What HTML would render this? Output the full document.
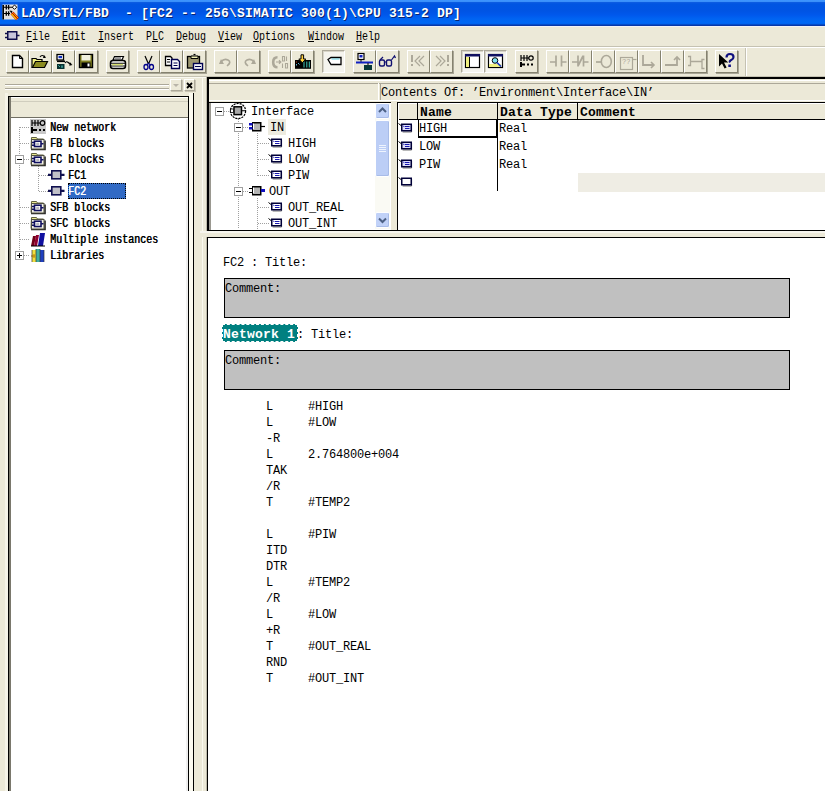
<!DOCTYPE html>
<html><head><meta charset="utf-8"><style>
*{margin:0;padding:0;box-sizing:border-box}
html,body{width:825px;height:791px;overflow:hidden;background:#ECE9D8}
body{position:relative;font-family:"Liberation Mono",monospace;color:#000}
.a{position:absolute}
.t{position:absolute;white-space:pre;line-height:16px}
.m{font-size:12px;transform:scaleX(0.8333);transform-origin:0 0}
.c{font-size:12px;letter-spacing:-0.2px}
.b6{font-size:12px;font-weight:normal;text-shadow:0.7px 0 0 currentColor;transform:scaleX(0.8333);transform-origin:0 0}
.btn{position:absolute;top:50px;width:23px;height:23px;border-top:1px solid #fff;border-left:1px solid #fff;border-right:1px solid #85826F;border-bottom:1px solid #85826F;box-shadow:1px 1px 0 #A8A595}
.btn svg{position:absolute;left:-1px;top:-1px}
.chk{background:#F5F4EE;border-top:1px solid #ACA899;border-left:1px solid #ACA899;border-right:1px solid #fff;border-bottom:1px solid #fff;box-shadow:inset 1px 1px 0 #d8d5c8}
</style></head><body>
<div class="a" style="left:0;top:0;width:825px;height:26px;background:linear-gradient(#3D95FF 0px,#3A90FA 1.5px,#0B5CE2 2.5px,#0055E2 4px,#0054E4 11px,#0058EC 15px,#0064F2 19px,#0068F4 23px,#0060EA 24px,#0838A8 25px,#0838A8 26px)"></div>
<svg class="a" style="left:0;top:0" width="20" height="22" viewBox="0 0 20 22">
<rect x="2.5" y="4.5" width="15" height="15" fill="#E6E2E0"/>
<path d="M3.2 5v14.5" stroke="#000" stroke-width="1.6"/>
<path d="M3 7.2h13M3 13.5h7" stroke="#000" stroke-width="1.1"/>
<path d="M6.3 5v4.5M8.6 5v4.5M6.3 11.3v4.5M8.6 11.3v4.5" stroke="#000" stroke-width="1.3"/>
<path d="M14.5 5l2.2 2.2l-2.2 2.2l-2.2-2.2z" fill="#fff" stroke="#000" stroke-width="1"/>
<path d="M9.5 10.5l3 0.5l-1 2.5z" fill="#000"/>
<path d="M12 13l5.5 6" stroke="#C00000" stroke-width="4"/>
<path d="M11.5 13.8l5 5.5" stroke="#FFE000" stroke-width="1.2"/><path d="M13 12.6l5 5.5" stroke="#FFE000" stroke-width="0.9"/>
</svg>
<div class="t " style="left:21px;top:6px;font-size:13px;font-weight:bold;letter-spacing:0.2px;color:#fff;text-shadow:1px 1px 0 #0a2470">LAD/STL/FBD  - [FC2 -- 256\SIMATIC 300(1)\CPU 315-2 DP]</div>
<div class="a" style="left:0px;top:26px;width:825px;height:1px;background:#F2F2F6;"></div>
<svg class="a" style="left:0;top:26px" width="22" height="18" viewBox="0 26 22 18">
<rect x="7.75" y="31.75" width="9" height="7.5" fill="#C8C6DA" stroke="#10104a" stroke-width="1.5"/>
<path d="M5 33.6h2.5M5 37.4h2.5M17 35.5h2.5" stroke="#10104a" stroke-width="1.5"/></svg>
<div class="t m" style="left:26px;top:29px;"><u>F</u>ile</div>
<div class="t m" style="left:62px;top:29px;"><u>E</u>dit</div>
<div class="t m" style="left:98px;top:29px;"><u>I</u>nsert</div>
<div class="t m" style="left:146px;top:29px;">P<u>L</u>C</div>
<div class="t m" style="left:176px;top:29px;"><u>D</u>ebug</div>
<div class="t m" style="left:218px;top:29px;"><u>V</u>iew</div>
<div class="t m" style="left:253px;top:29px;"><u>O</u>ptions</div>
<div class="t m" style="left:308px;top:29px;"><u>W</u>indow</div>
<div class="t m" style="left:356px;top:29px;"><u>H</u>elp</div>
<div class="a" style="left:0px;top:46px;width:825px;height:1px;background:#C5C2B2;"></div>
<div class="a" style="left:0px;top:47px;width:825px;height:1px;background:#fff;"></div>
<div class="btn" style="left:6px"><svg width="23" height="23" viewBox="0 0 23 23"><path d="M6.5 5.5h7l3 3v9h-10z" fill="#fff" stroke="#000" stroke-width="1.4"/><path d="M13.5 5.5v3h3" fill="none" stroke="#000" stroke-width="1"/></svg></div>
<div class="btn" style="left:29px"><svg width="23" height="23" viewBox="0 0 23 23"><path d="M3 8.5h4l1 1h5v8h-10z" fill="#f0f080" stroke="#000" stroke-width="1.2"/><path d="M3.5 17.5l3-6h12l-3 6z" fill="#8c8c20" stroke="#000" stroke-width="1.2"/><path d="M11 7q2-3 5 0" fill="none" stroke="#000" stroke-width="1.2"/><path d="M15 5l2 3h-3z" fill="#000"/></svg></div>
<div class="btn" style="left:52px"><svg width="23" height="23" viewBox="0 0 23 23"><rect x="5" y="4.5" width="6.5" height="5.5" fill="#fff" stroke="#000" stroke-width="1.3"/><rect x="6.5" y="6" width="3.5" height="2.2" fill="#1030C0"/><path d="M5 11.3h8" stroke="#000" stroke-width="1.6"/><rect x="5" y="14" width="7.5" height="5" fill="#063030"/><path d="M6.5 15.5l1.2 1.2M10 15.5v2.3" stroke="#60E0D0" stroke-width="1"/><path d="M13 13q1.5-2.2 3.2-0.5t2.8 0.5" fill="none" stroke="#000" stroke-width="1.2"/><path d="M17.5 12.5l3 2.5l-3.2 0.8z" fill="#000"/></svg></div>
<div class="btn" style="left:75px"><svg width="23" height="23" viewBox="0 0 23 23"><rect x="4.5" y="4.5" width="13" height="13" fill="#808020" stroke="#000" stroke-width="1.4"/><rect x="6.5" y="5" width="9" height="5.5" fill="#f0f0e0"/><rect x="6.5" y="12.5" width="9" height="5" fill="#000"/><rect x="12.5" y="13.5" width="2" height="3" fill="#fff"/></svg></div>
<div class="btn" style="left:106px"><svg width="23" height="23" viewBox="0 0 23 23"><path d="M8.5 6.5h9l-1.5 3.5h-9z" fill="#fff" stroke="#000" stroke-width="1.2"/><path d="M9 8h6" stroke="#000" stroke-width="0.8"/><rect x="4.5" y="10.5" width="15" height="8" rx="2.5" fill="#fff" stroke="#000" stroke-width="1.5"/><path d="M5 13.3h14M5 16h14" stroke="#000" stroke-width="1.1"/><path d="M6 14.6h11" stroke="#D8E070" stroke-width="1.4"/></svg></div>
<div class="btn" style="left:137px"><svg width="23" height="23" viewBox="0 0 23 23"><path d="M8 6l3.5 8M15 6l-3.5 8" stroke="#000" stroke-width="1.2"/><ellipse cx="9" cy="17" rx="2" ry="2.5" fill="none" stroke="#00008A" stroke-width="1.3"/><ellipse cx="14.5" cy="17" rx="2" ry="2.5" fill="none" stroke="#00008A" stroke-width="1.3"/><path d="M10 14.5l1.5-1l1.5 1" stroke="#00008A" stroke-width="1.1" fill="none"/></svg></div>
<div class="btn" style="left:160px"><svg width="23" height="23" viewBox="0 0 23 23"><path d="M5.5 6.5h5l1.5 1.5v7.5h-6.5z" fill="#fff" stroke="#000" stroke-width="1.3"/><path d="M7 9.5h3M7 12h3" stroke="#000" stroke-width="1.1"/><path d="M11.5 9.5h6l2 2v7h-8z" fill="#fff" stroke="#000050" stroke-width="1.4"/><path d="M13.5 13h4M13.5 15.5h4" stroke="#000050" stroke-width="1.1"/></svg></div>
<div class="btn" style="left:183px"><svg width="23" height="23" viewBox="0 0 23 23"><rect x="4.5" y="6.5" width="12" height="11.5" fill="#9C9670" stroke="#000" stroke-width="1.3"/><path d="M8 6h7v2.5h-7z" fill="#F0F0B8" stroke="#000" stroke-width="1"/><path d="M10.5 4.5h2" stroke="#000" stroke-width="1.2"/><rect x="10.5" y="13.5" width="9" height="6" fill="#fff" stroke="#000050" stroke-width="1.4"/><path d="M12 16.5h6" stroke="#000050" stroke-width="1.1"/></svg></div>
<div class="btn" style="left:214px"><svg width="23" height="23" viewBox="0 0 23 23"><path d="M7 9l-2 5h5z" fill="#ACA899"/><path d="M7 12q3-4 7-2t-1 6" fill="none" stroke="#ACA899" stroke-width="1.6"/></svg></div>
<div class="btn" style="left:237px"><svg width="23" height="23" viewBox="0 0 23 23"><path d="M17 9l2 5h-5z" fill="#ACA899"/><path d="M17 12q-3-4-7-2t1 6" fill="none" stroke="#ACA899" stroke-width="1.6"/></svg></div>
<div class="btn" style="left:268px"><svg width="23" height="23" viewBox="0 0 23 23"><path d="M9.5 7.2q-4.3 0-4.3 5t4.3 5" fill="none" stroke="#ACA899" stroke-width="2.6"/><path d="M8 12h4.5M11 10.3l1.8 1.7l-1.8 1.7" stroke="#ACA899" stroke-width="1.2" fill="none"/><path d="M14.5 6.5h2v4.5h-2zM18.5 6.5v4.5M14.5 13.5v4.5M17.5 13.5h2v4.5h-2z" fill="none" stroke="#ACA899" stroke-width="1.1"/></svg></div>
<div class="btn" style="left:291px"><svg width="23" height="23" viewBox="0 0 23 23"><rect x="4" y="10" width="16" height="8.8" fill="#000"/><path d="M13 11.5v6M15.8 11.5v6M18.3 11.5v6" stroke="#40C8B8" stroke-width="1"/><path d="M5.5 11.5v1" stroke="#c04020" stroke-width="1"/><path d="M5.5 14v1.5M7 13l1.5 1.5" stroke="#60B0D0" stroke-width="1"/><path d="M10 4.8h2.6v4.2h2.2l-3.5 3.8l-3.5-3.8h2.2z" fill="#FFD040" stroke="#000" stroke-width="1"/></svg></div>
<div class="btn chk" style="left:322px"><svg width="23" height="23" viewBox="0 0 23 23"><path d="M6 9.5l3 -2h10v7h-10z" fill="#fff" stroke="#000" stroke-width="1.3"/><path d="M9.5 9h8" stroke="#60d0e0" stroke-width="1"/></svg></div>
<div class="btn" style="left:353px"><svg width="23" height="23" viewBox="0 0 23 23"><rect x="5" y="3.5" width="6" height="6" fill="#fff" stroke="#000" stroke-width="1.2"/><rect x="6.5" y="5" width="3" height="2.5" fill="#1020c0"/><path d="M8 10v2" stroke="#000"/><path d="M3 12.5h17" stroke="#1020c0" stroke-width="2"/><path d="M15 13v2" stroke="#000"/><rect x="11" y="15" width="8" height="5" fill="#083838"/></svg></div>
<div class="btn" style="left:376px"><svg width="23" height="23" viewBox="0 0 23 23"><rect x="3.5" y="10" width="5" height="6" rx="1.5" fill="none" stroke="#101070" stroke-width="1.4"/><rect x="10.5" y="10" width="5" height="6" rx="1.5" fill="none" stroke="#101070" stroke-width="1.4"/><path d="M8.5 12h2M4 10l3-3M15.5 10l3-4l1 2" fill="none" stroke="#101070" stroke-width="1.2"/></svg></div>
<div class="btn" style="left:407px"><svg width="23" height="23" viewBox="0 0 23 23"><path d="M5 5v7M5 14v2" stroke="#ACA899" stroke-width="2"/><path d="M13 6l-5 5l5 5M17 6l-5 5l5 5" fill="none" stroke="#ACA899" stroke-width="1.2"/></svg></div>
<div class="btn" style="left:430px"><svg width="23" height="23" viewBox="0 0 23 23"><path d="M18 5v7M18 14v2" stroke="#ACA899" stroke-width="2"/><path d="M6 6l5 5l-5 5M10 6l5 5l-5 5" fill="none" stroke="#ACA899" stroke-width="1.2"/></svg></div>
<div class="btn chk" style="left:461px"><svg width="23" height="23" viewBox="0 0 23 23"><rect x="4.5" y="4.5" width="14" height="13" fill="#fff" stroke="#000" stroke-width="1.2"/><rect x="4" y="4" width="15" height="2.5" fill="#101060"/><rect x="5" y="7" width="3" height="10" fill="#f0f080"/><path d="M8.5 7v10" stroke="#000"/></svg></div>
<div class="btn chk" style="left:484px"><svg width="23" height="23" viewBox="0 0 23 23"><rect x="4.5" y="4.5" width="14" height="13" fill="#fff" stroke="#000" stroke-width="1.2"/><rect x="4" y="4" width="15" height="2.5" fill="#101060"/><rect x="5" y="14" width="12" height="3" fill="#f0f080"/><circle cx="11" cy="10.5" r="2.8" fill="#80e0f0" stroke="#000" stroke-width="1"/><path d="M13 12.5l4 4" stroke="#1030c0" stroke-width="1.6"/></svg></div>
<div class="btn" style="left:515px"><svg width="23" height="23" viewBox="0 0 23 23"><path d="M6 5v6M9 5v6M6 8h6M12 5v6M12 8h2" stroke="#000" stroke-width="1.2"/><circle cx="16" cy="8" r="2.2" fill="none" stroke="#000" stroke-width="1.2"/><path d="M6 12v5M6 14.5h4" stroke="#000" stroke-width="2"/><rect x="12" y="13.5" width="2" height="2" fill="#000"/><rect x="16" y="13.5" width="2" height="2" fill="#000"/></svg></div>
<div class="btn" style="left:546px"><svg width="23" height="23" viewBox="0 0 23 23"><path d="M4 12h6M15.5 12h5M10 5.5v11M15.5 5.5v11" stroke="#ACA899" stroke-width="1.7"/></svg></div>
<div class="btn" style="left:569px"><svg width="23" height="23" viewBox="0 0 23 23"><path d="M3 12h6M14.5 12h5M9 5.5v11M14.5 5.5v11M14 6l-5 10" stroke="#ACA899" stroke-width="1.7"/></svg></div>
<div class="btn" style="left:592px"><svg width="23" height="23" viewBox="0 0 23 23"><path d="M4 12h5" stroke="#ACA899" stroke-width="1.7"/><ellipse cx="14.3" cy="11.5" rx="5" ry="6" fill="none" stroke="#ACA899" stroke-width="1.6"/></svg></div>
<div class="btn" style="left:615px"><svg width="23" height="23" viewBox="0 0 23 23"><rect x="5.5" y="7.5" width="12" height="12" fill="none" stroke="#ACA899" stroke-width="1.2"/><path d="M17.5 9.5h4" stroke="#ACA899" stroke-width="1.2"/><text x="7" y="14" font-size="7" fill="#ACA899" font-family="Liberation Mono">??</text></svg></div>
<div class="btn" style="left:638px"><svg width="23" height="23" viewBox="0 0 23 23"><path d="M5 5v10h10" fill="none" stroke="#ACA899" stroke-width="1.8"/><path d="M13 12l3 3l-3 3" fill="none" stroke="#ACA899" stroke-width="1.6"/></svg></div>
<div class="btn" style="left:661px"><svg width="23" height="23" viewBox="0 0 23 23"><path d="M4 15h12v-8" fill="none" stroke="#ACA899" stroke-width="1.8"/><path d="M13 10l3-3l3 3" fill="none" stroke="#ACA899" stroke-width="1.6"/></svg></div>
<div class="btn" style="left:684px"><svg width="23" height="23" viewBox="0 0 23 23"><path d="M4 6.5h2.5v9h-2.5M7 11.5h11M20.5 9.5h-2.5v9h2.5" fill="none" stroke="#ACA899" stroke-width="1.3"/></svg></div>
<div class="btn" style="left:715px"><svg width="23" height="23" viewBox="0 0 23 23"><path d="M4 4v12.5l3-3l2.6 5l2-1l-2.6-5h4.3z" fill="#000"/><path d="M11.5 7.5q0-3.5 3.5-3.5t3.5 3q0 2-2.2 3t-1.3 2.5" fill="none" stroke="#101080" stroke-width="2.2"/><rect x="13.3" y="14.5" width="2.6" height="2.5" fill="#101080"/></svg></div>
<div class="a" style="left:745px;top:48px;width:1px;height:28px;background:#C5C2B2;"></div>
<div class="a" style="left:746px;top:48px;width:1px;height:28px;background:#fff;"></div>
<div class="a" style="left:0px;top:76px;width:825px;height:1px;background:#C5C2B2;"></div>
<div class="a" style="left:0px;top:77px;width:825px;height:1px;background:#FAF9F2;"></div>
<div class="a" style="left:5px;top:84px;width:164px;height:1px;background:#ACA899;"></div>
<div class="a" style="left:5px;top:85px;width:164px;height:1px;background:#fff;"></div>
<div class="a" style="left:5px;top:88px;width:164px;height:1px;background:#ACA899;"></div>
<div class="a" style="left:5px;top:89px;width:164px;height:1px;background:#fff;"></div>
<div class="a" style="left:170px;top:79px;width:12px;height:12px;border-top:1px solid #fff;border-left:1px solid #fff;border-right:1px solid #ACA899;border-bottom:1px solid #ACA899;box-shadow:1px 1px 0 #c8c4b4"></div>
<div class="a" style="left:173px;top:84px;width:0;height:0;border-left:3px solid transparent;border-right:3px solid transparent;border-top:3px solid #b8b4a8"></div>
<div class="a" style="left:184px;top:79px;width:11px;height:12px;border-top:1px solid #fff;border-left:1px solid #fff;border-right:1px solid #ACA899;border-bottom:1px solid #ACA899;box-shadow:1px 1px 0 #c8c4b4"></div>
<svg class="a" style="left:186px;top:82px" width="8" height="7"><path d="M1 1l5 5M6 1l-5 5" stroke="#000" stroke-width="1.8"/></svg>
<div class="a" style="left:8px;top:96px;width:181px;height:700px;background:#fff;border:1px solid #000"></div>
<div class="a" style="left:9px;top:97px;width:179px;height:21px;background:#ECE9D8;border-top:1px solid #fff;border-bottom:1px solid #716F64"></div>
<div class="a" style="left:9px;top:101px;width:179px;height:1px;background:#D0CDBE;"></div>
<div class="a" style="left:9px;top:97px;width:2px;height:700px;background:#7a786c;"></div>
<div class="a" style="left:189px;top:93px;width:4px;height:700px;background:#FBFAF0;"></div>
<div class="a" style="left:5px;top:93px;width:3px;height:700px;background:#F6F4E8;"></div>
<div class="a" style="left:202px;top:77px;width:1px;height:714px;background:#FBFAF0;"></div>
<div class="a" style="left:206px;top:77px;width:1px;height:714px;background:#BDBAAA;"></div>
<div class="a" style="left:186px;top:119px;width:2px;height:672px;background:#EFEFEF;"></div>
<div class="a" style="left:193px;top:93px;width:1px;height:700px;background:#000;"></div>
<div class="a" style="left:19px;top:127px;width:1px;height:125px;background:repeating-linear-gradient(#A0A0A0 0 1px,transparent 1px 2px)"></div>
<div class="a" style="left:20px;top:127px;width:10px;height:1px;background:repeating-linear-gradient(90deg,#A0A0A0 0 1px,transparent 1px 2px)"></div>
<div class="a" style="left:20px;top:143px;width:10px;height:1px;background:repeating-linear-gradient(90deg,#A0A0A0 0 1px,transparent 1px 2px)"></div>
<div class="a" style="left:20px;top:207px;width:10px;height:1px;background:repeating-linear-gradient(90deg,#A0A0A0 0 1px,transparent 1px 2px)"></div>
<div class="a" style="left:20px;top:223px;width:10px;height:1px;background:repeating-linear-gradient(90deg,#A0A0A0 0 1px,transparent 1px 2px)"></div>
<div class="a" style="left:20px;top:239px;width:10px;height:1px;background:repeating-linear-gradient(90deg,#A0A0A0 0 1px,transparent 1px 2px)"></div>
<div class="a" style="left:38px;top:166px;width:1px;height:25px;background:repeating-linear-gradient(#A0A0A0 0 1px,transparent 1px 2px)"></div>
<div class="a" style="left:39px;top:175px;width:10px;height:1px;background:repeating-linear-gradient(90deg,#A0A0A0 0 1px,transparent 1px 2px)"></div>
<div class="a" style="left:39px;top:191px;width:10px;height:1px;background:repeating-linear-gradient(90deg,#A0A0A0 0 1px,transparent 1px 2px)"></div>
<div class="a" style="left:24px;top:159px;width:6px;height:1px;background:repeating-linear-gradient(90deg,#A0A0A0 0 1px,transparent 1px 2px)"></div>
<div class="a" style="left:24px;top:255px;width:6px;height:1px;background:repeating-linear-gradient(90deg,#A0A0A0 0 1px,transparent 1px 2px)"></div>
<div class="a" style="left:15px;top:155px;width:9px;height:9px;border:1px solid #A0A0A0;background:#fff"></div>
<div class="a" style="left:17px;top:159px;width:5px;height:1px;background:#000;"></div>
<div class="a" style="left:15px;top:251px;width:9px;height:9px;border:1px solid #A0A0A0;background:#fff"></div>
<div class="a" style="left:17px;top:255px;width:5px;height:1px;background:#000;"></div>
<div class="a" style="left:19px;top:253px;width:1px;height:5px;background:#000;"></div>
<svg class="a" style="left:30px;top:119px" width="16" height="15" viewBox="0 0 16 15"><rect x="0" y="0" width="16" height="15" fill="#c8c8c8"/><path d="M2 1v6M5 1v6M2 4h6M8 1v6M8 4h2" stroke="#000" stroke-width="1.2"/><circle cx="12.5" cy="4" r="2.3" fill="none" stroke="#000" stroke-width="1.2"/><path d="M2 8v6M2 11h5" stroke="#000" stroke-width="2"/><rect x="9" y="10" width="2" height="2" fill="#000"/><rect x="13" y="10" width="2" height="2" fill="#000"/></svg>
<svg class="a" style="left:30px;top:135px" width="16" height="16" viewBox="0 0 16 16"><path d="M1.5 2.5h5l1 1.5h6v9.5h-12.5z" fill="#e8e890" stroke="#606040" stroke-width="1"/><path d="M1 14.5h14v-9" fill="none" stroke="#202020" stroke-width="1.6"/><rect x="1.5" y="4.5" width="12.5" height="9.5" fill="#f4f2e6" stroke="#505040" stroke-width="1"/><rect x="4.5" y="6.2" width="6.5" height="5.3" fill="#fff" stroke="#101060" stroke-width="1.6"/><rect x="6.2" y="7.7" width="3" height="2.5" fill="#b8b8c0"/><path d="M2 7.5h2.5M2 10.2h2.5M11 8.8h2.5" stroke="#101060" stroke-width="1.4"/></svg>
<svg class="a" style="left:30px;top:151px" width="16" height="16" viewBox="0 0 16 16"><path d="M1.5 2.5h5l1 1.5h6v9.5h-12.5z" fill="#e8e890" stroke="#606040" stroke-width="1"/><path d="M1 14.5h14v-9" fill="none" stroke="#202020" stroke-width="1.6"/><rect x="1.5" y="4.5" width="12.5" height="9.5" fill="#f4f2e6" stroke="#505040" stroke-width="1"/><rect x="4.5" y="6.2" width="6.5" height="5.3" fill="#fff" stroke="#101060" stroke-width="1.6"/><rect x="6.2" y="7.7" width="3" height="2.5" fill="#b8b8c0"/><path d="M2 7.5h2.5M2 10.2h2.5M11 8.8h2.5" stroke="#101060" stroke-width="1.4"/></svg>
<svg class="a" style="left:30px;top:199px" width="16" height="16" viewBox="0 0 16 16"><path d="M1.5 2.5h5l1 1.5h6v9.5h-12.5z" fill="#e8e890" stroke="#606040" stroke-width="1"/><path d="M1 14.5h14v-9" fill="none" stroke="#202020" stroke-width="1.6"/><rect x="1.5" y="4.5" width="12.5" height="9.5" fill="#f4f2e6" stroke="#505040" stroke-width="1"/><rect x="4.5" y="6.2" width="6.5" height="5.3" fill="#fff" stroke="#101060" stroke-width="1.6"/><rect x="6.2" y="7.7" width="3" height="2.5" fill="#b8b8c0"/><path d="M2 7.5h2.5M2 10.2h2.5M11 8.8h2.5" stroke="#101060" stroke-width="1.4"/></svg>
<svg class="a" style="left:30px;top:215px" width="16" height="16" viewBox="0 0 16 16"><path d="M1.5 2.5h5l1 1.5h6v9.5h-12.5z" fill="#e8e890" stroke="#606040" stroke-width="1"/><path d="M1 14.5h14v-9" fill="none" stroke="#202020" stroke-width="1.6"/><rect x="1.5" y="4.5" width="12.5" height="9.5" fill="#f4f2e6" stroke="#505040" stroke-width="1"/><rect x="4.5" y="6.2" width="6.5" height="5.3" fill="#fff" stroke="#101060" stroke-width="1.6"/><rect x="6.2" y="7.7" width="3" height="2.5" fill="#b8b8c0"/><path d="M2 7.5h2.5M2 10.2h2.5M11 8.8h2.5" stroke="#101060" stroke-width="1.4"/></svg>
<svg class="a" style="left:48px;top:169px" width="17" height="12" viewBox="0 0 17 12"><rect x="3.8" y="1.8" width="9" height="8" fill="#c0c0c8" stroke="#101050" stroke-width="1.6"/><path d="M0 5.8h3.5M13 5.8h3.5" stroke="#101050" stroke-width="2.2"/></svg>
<svg class="a" style="left:48px;top:185px" width="17" height="12" viewBox="0 0 17 12"><rect x="3.8" y="1.8" width="9" height="8" fill="#c0c0c8" stroke="#101050" stroke-width="1.6"/><path d="M0 5.8h3.5M13 5.8h3.5" stroke="#101050" stroke-width="2.2"/></svg>
<svg class="a" style="left:30px;top:231px" width="16" height="16" viewBox="0 0 16 16"><path d="M1 15l2-10h3l-2 10z" fill="#700018"/><path d="M4 15l2-11h3l-2 11z" fill="#900030"/><path d="M8 15l2-13h5l-2 13z" fill="#1010a0"/><path d="M1 15h14" stroke="#000"/></svg>
<svg class="a" style="left:30px;top:247px" width="16" height="16" viewBox="0 0 16 16"><rect x="2" y="3" width="4" height="12" fill="#f0e040"/><rect x="6" y="2" width="4" height="13" fill="#40b0a0"/><rect x="10" y="3" width="4" height="12" fill="#2040c0"/><path d="M1 9h4M4 7v4" stroke="#c08000" stroke-width="1"/><path d="M2 3v12M6 2v13M10 2v13M14 3v12" stroke="#303030" stroke-width="0.7"/></svg>
<div class="t b6" style="left:50px;top:120px;">New network</div>
<div class="t b6" style="left:50px;top:136px;">FB blocks</div>
<div class="t b6" style="left:50px;top:152px;">FC blocks</div>
<div class="t b6" style="left:50px;top:200px;">SFB blocks</div>
<div class="t b6" style="left:50px;top:216px;">SFC blocks</div>
<div class="t b6" style="left:50px;top:232px;">Multiple instances</div>
<div class="t b6" style="left:50px;top:248px;">Libraries</div>
<div class="t b6" style="left:68px;top:168px;">FC1</div>
<div class="a" style="left:68px;top:183px;width:58px;height:16px;background:#316AC5;outline:1px dotted #fff;outline-offset:-1px"></div>
<div class="a" style="left:68px;top:183px;width:58px;height:16px;border:1px dotted #000"></div>
<div class="t b6" style="left:68px;top:184px;color:#fff">FC2</div>
<div class="a" style="left:207px;top:77px;width:620px;height:154px;background:#ECE9D8;border-left:2px solid #000;border-top:2px solid #000"></div>
<div class="a" style="left:209px;top:80px;width:616px;height:1px;background:#fff;"></div>
<div class="a" style="left:209px;top:83px;width:616px;height:1px;background:#ACA899;"></div>
<div class="a" style="left:378px;top:83px;width:1px;height:17px;background:#fff;"></div>
<div class="a" style="left:380px;top:83px;width:1px;height:17px;background:#ACA899;"></div>
<div class="t c" style="left:381px;top:85px;">Contents Of: ’Environment\Interface\IN’</div>
<div class="a" style="left:209px;top:100px;width:616px;height:1px;background:#fff;"></div>
<div class="a" style="left:209px;top:102px;width:182px;height:129px;background:#fff;border-top:1px solid #000;border-bottom:1px solid #000"></div>
<div class="a" style="left:209px;top:103px;width:2px;height:127px;background:#9a9890;"></div>
<div class="a" style="left:375px;top:103px;width:15px;height:126px;background:#FAFAF4;"></div>
<div class="a" style="left:375px;top:103px;width:15px;height:16px;background:#C1D2F8;border:1px solid #fff;border-radius:2px;box-shadow:inset -1px -1px 0 #a8bce8"></div>
<svg class="a" style="left:378px;top:107px" width="9" height="7"><path d="M1 5l3.5-3.5l3.5 3.5" fill="none" stroke="#4D6185" stroke-width="2"/></svg>
<div class="a" style="left:375px;top:120px;width:15px;height:57px;background:#BCCEF6;border:1px solid #fff;border-radius:2px;box-shadow:inset -1px -1px 0 #a8bce8"></div>
<div class="a" style="left:379px;top:145px;width:7px;height:1px;background:#EEF4FE;"></div>
<div class="a" style="left:379px;top:147px;width:7px;height:1px;background:#EEF4FE;"></div>
<div class="a" style="left:379px;top:149px;width:7px;height:1px;background:#EEF4FE;"></div>
<div class="a" style="left:379px;top:151px;width:7px;height:1px;background:#EEF4FE;"></div>
<div class="a" style="left:375px;top:212px;width:15px;height:16px;background:#C1D2F8;border:1px solid #fff;border-radius:2px;box-shadow:inset -1px -1px 0 #a8bce8"></div>
<svg class="a" style="left:378px;top:217px" width="9" height="7"><path d="M1 1.5l3.5 3.5l3.5-3.5" fill="none" stroke="#4D6185" stroke-width="2"/></svg>
<div class="a" style="left:224px;top:111px;width:6px;height:1px;background:repeating-linear-gradient(90deg,#A0A0A0 0 1px,transparent 1px 2px)"></div>
<div class="a" style="left:238px;top:119px;width:1px;height:110px;background:repeating-linear-gradient(#A0A0A0 0 1px,transparent 1px 2px)"></div>
<div class="a" style="left:243px;top:127px;width:6px;height:1px;background:repeating-linear-gradient(90deg,#A0A0A0 0 1px,transparent 1px 2px)"></div>
<div class="a" style="left:243px;top:191px;width:6px;height:1px;background:repeating-linear-gradient(90deg,#A0A0A0 0 1px,transparent 1px 2px)"></div>
<div class="a" style="left:257px;top:133px;width:1px;height:43px;background:repeating-linear-gradient(#A0A0A0 0 1px,transparent 1px 2px)"></div>
<div class="a" style="left:257px;top:198px;width:1px;height:31px;background:repeating-linear-gradient(#A0A0A0 0 1px,transparent 1px 2px)"></div>
<div class="a" style="left:258px;top:143px;width:11px;height:1px;background:repeating-linear-gradient(90deg,#A0A0A0 0 1px,transparent 1px 2px)"></div>
<div class="a" style="left:258px;top:159px;width:11px;height:1px;background:repeating-linear-gradient(90deg,#A0A0A0 0 1px,transparent 1px 2px)"></div>
<div class="a" style="left:258px;top:175px;width:11px;height:1px;background:repeating-linear-gradient(90deg,#A0A0A0 0 1px,transparent 1px 2px)"></div>
<div class="a" style="left:258px;top:207px;width:11px;height:1px;background:repeating-linear-gradient(90deg,#A0A0A0 0 1px,transparent 1px 2px)"></div>
<div class="a" style="left:258px;top:223px;width:11px;height:1px;background:repeating-linear-gradient(90deg,#A0A0A0 0 1px,transparent 1px 2px)"></div>
<div class="a" style="left:215px;top:107px;width:9px;height:9px;border:1px solid #A0A0A0;background:#fff"></div>
<div class="a" style="left:217px;top:111px;width:5px;height:1px;background:#000;"></div>
<div class="a" style="left:234px;top:123px;width:9px;height:9px;border:1px solid #A0A0A0;background:#fff"></div>
<div class="a" style="left:236px;top:127px;width:5px;height:1px;background:#000;"></div>
<div class="a" style="left:234px;top:187px;width:9px;height:9px;border:1px solid #A0A0A0;background:#fff"></div>
<div class="a" style="left:236px;top:191px;width:5px;height:1px;background:#000;"></div>
<svg class="a" style="left:229px;top:102px" width="18" height="18" viewBox="0 0 18 18"><circle cx="9" cy="9" r="7.6" fill="#fff" stroke="#000" stroke-width="1.2" stroke-dasharray="2.2 0.9"/><rect x="5" y="4.8" width="7.5" height="7.8" fill="#a8a8a8" stroke="#000" stroke-width="1.5"/><path d="M1 8.7h4M12.5 8.7h4" stroke="#000" stroke-width="1.1"/><rect x="1.5" y="7" width="3" height="3.5" fill="#fff" stroke="#000" stroke-width="0.8"/></svg>
<svg class="a" style="left:248px;top:121px" width="18" height="11" viewBox="0 0 18 11"><rect x="4.75" y="1.75" width="8" height="8" fill="#b4b4b4" stroke="#000" stroke-width="1.5"/><path d="M5.5 2.5v6" stroke="#fff" stroke-width="1"/><path d="M13 5.5h4" stroke="#000" stroke-width="1.2"/><rect x="1" y="2" width="3.5" height="2.5" fill="#1010c0"/><rect x="1" y="6" width="3.5" height="2.5" fill="#1010c0"/></svg>
<svg class="a" style="left:248px;top:185px" width="18" height="11" viewBox="0 0 18 11"><rect x="4.75" y="1.75" width="8" height="8" fill="#b4b4b4" stroke="#000" stroke-width="1.5"/><path d="M5.5 2.5v6" stroke="#fff" stroke-width="1"/><path d="M1 3.5h4M1 7.5h4" stroke="#000" stroke-width="1.2"/><rect x="13" y="4" width="4" height="3" fill="#1010c0"/></svg>
<svg class="a" style="left:268px;top:138px" width="15" height="10" viewBox="0 0 15 10"><path d="M0.5 0.5l2.5 2" stroke="#000" stroke-width="1"/><path d="M13.6 2v7h-9" fill="none" stroke="#000" stroke-opacity="0.55" stroke-width="1"/><rect x="3.75" y="1.25" width="9.5" height="6.5" fill="#fff" stroke="#000038" stroke-width="1.5"/><path d="M7 3.5h4.5M7 5.5h4.5" stroke="#1818b0" stroke-width="1.1"/><path d="M5 2.5l1.3 1.5" stroke="#1818b0" stroke-width="0.9"/></svg>
<svg class="a" style="left:268px;top:154px" width="15" height="10" viewBox="0 0 15 10"><path d="M0.5 0.5l2.5 2" stroke="#000" stroke-width="1"/><path d="M13.6 2v7h-9" fill="none" stroke="#000" stroke-opacity="0.55" stroke-width="1"/><rect x="3.75" y="1.25" width="9.5" height="6.5" fill="#fff" stroke="#000038" stroke-width="1.5"/><path d="M7 3.5h4.5M7 5.5h4.5" stroke="#1818b0" stroke-width="1.1"/><path d="M5 2.5l1.3 1.5" stroke="#1818b0" stroke-width="0.9"/></svg>
<svg class="a" style="left:268px;top:170px" width="15" height="10" viewBox="0 0 15 10"><path d="M0.5 0.5l2.5 2" stroke="#000" stroke-width="1"/><path d="M13.6 2v7h-9" fill="none" stroke="#000" stroke-opacity="0.55" stroke-width="1"/><rect x="3.75" y="1.25" width="9.5" height="6.5" fill="#fff" stroke="#000038" stroke-width="1.5"/><path d="M7 3.5h4.5M7 5.5h4.5" stroke="#1818b0" stroke-width="1.1"/><path d="M5 2.5l1.3 1.5" stroke="#1818b0" stroke-width="0.9"/></svg>
<svg class="a" style="left:268px;top:202px" width="15" height="10" viewBox="0 0 15 10"><path d="M0.5 0.5l2.5 2" stroke="#000" stroke-width="1"/><path d="M13.6 2v7h-9" fill="none" stroke="#000" stroke-opacity="0.55" stroke-width="1"/><rect x="3.75" y="1.25" width="9.5" height="6.5" fill="#fff" stroke="#000038" stroke-width="1.5"/><path d="M7 3.5h4.5M7 5.5h4.5" stroke="#1818b0" stroke-width="1.1"/><path d="M5 2.5l1.3 1.5" stroke="#1818b0" stroke-width="0.9"/></svg>
<svg class="a" style="left:268px;top:218px" width="15" height="10" viewBox="0 0 15 10"><path d="M0.5 0.5l2.5 2" stroke="#000" stroke-width="1"/><path d="M13.6 2v7h-9" fill="none" stroke="#000" stroke-opacity="0.55" stroke-width="1"/><rect x="3.75" y="1.25" width="9.5" height="6.5" fill="#fff" stroke="#000038" stroke-width="1.5"/><path d="M7 3.5h4.5M7 5.5h4.5" stroke="#1818b0" stroke-width="1.1"/><path d="M5 2.5l1.3 1.5" stroke="#1818b0" stroke-width="0.9"/></svg>
<div class="t c" style="left:251px;top:104px;">Interface</div>
<div class="a" style="left:268px;top:119px;width:18px;height:16px;background:#EDEBE0;"></div>
<div class="t c" style="left:270px;top:120px;">IN</div>
<div class="t c" style="left:288px;top:136px;">HIGH</div>
<div class="t c" style="left:288px;top:152px;">LOW</div>
<div class="t c" style="left:288px;top:168px;">PIW</div>
<div class="t c" style="left:288px;top:200px;">OUT_REAL</div>
<div class="t c" style="left:288px;top:216px;">OUT_INT</div>
<div class="t c" style="left:269px;top:184px;">OUT</div>
<div class="a" style="left:397px;top:102px;width:430px;height:129px;background:#fff;border-top:1px solid #000;border-left:1px solid #000;border-bottom:1px solid #000"></div>
<div class="a" style="left:399px;top:104px;width:426px;height:15px;background:#ECE9D8;"></div>
<div class="a" style="left:399px;top:119px;width:426px;height:1px;background:#000;"></div>
<div class="a" style="left:417px;top:103px;width:1px;height:16px;background:#000;"></div>
<div class="a" style="left:497px;top:103px;width:1px;height:88px;background:#000;"></div>
<div class="a" style="left:577px;top:103px;width:1px;height:16px;background:#000;"></div>
<div class="t c" style="left:420px;top:105px;font-size:13px;font-weight:bold;letter-spacing:0.2px">Name</div>
<div class="t c" style="left:500px;top:105px;font-size:13px;font-weight:bold;letter-spacing:0.2px">Data Type</div>
<div class="t c" style="left:580px;top:105px;font-size:13px;font-weight:bold;letter-spacing:0.2px">Comment</div>
<div class="a" style="left:418px;top:119px;width:80px;height:19px;border:1px solid #000;border-right:2px solid #000;border-bottom:2px solid #000"></div>
<svg class="a" style="left:398px;top:123px" width="15" height="10" viewBox="0 0 15 10"><path d="M0.5 0.5l2.5 2" stroke="#000" stroke-width="1"/><path d="M13.6 2v7h-9" fill="none" stroke="#000" stroke-opacity="0.55" stroke-width="1"/><rect x="3.75" y="1.25" width="9.5" height="6.5" fill="#DCDCF8" stroke="#000038" stroke-width="1.5"/><path d="M7 3.5h4.5M7 5.5h4.5" stroke="#1818b0" stroke-width="1.1"/><path d="M5 2.5l1.3 1.5" stroke="#1818b0" stroke-width="0.9"/></svg>
<div class="t c" style="left:419px;top:121px;">HIGH</div>
<div class="t c" style="left:499px;top:121px;">Real</div>
<svg class="a" style="left:398px;top:141px" width="15" height="10" viewBox="0 0 15 10"><path d="M0.5 0.5l2.5 2" stroke="#000" stroke-width="1"/><path d="M13.6 2v7h-9" fill="none" stroke="#000" stroke-opacity="0.55" stroke-width="1"/><rect x="3.75" y="1.25" width="9.5" height="6.5" fill="#DCDCF8" stroke="#000038" stroke-width="1.5"/><path d="M7 3.5h4.5M7 5.5h4.5" stroke="#1818b0" stroke-width="1.1"/><path d="M5 2.5l1.3 1.5" stroke="#1818b0" stroke-width="0.9"/></svg>
<div class="t c" style="left:419px;top:139px;">LOW</div>
<div class="t c" style="left:499px;top:139px;">Real</div>
<svg class="a" style="left:398px;top:159px" width="15" height="10" viewBox="0 0 15 10"><path d="M0.5 0.5l2.5 2" stroke="#000" stroke-width="1"/><path d="M13.6 2v7h-9" fill="none" stroke="#000" stroke-opacity="0.55" stroke-width="1"/><rect x="3.75" y="1.25" width="9.5" height="6.5" fill="#DCDCF8" stroke="#000038" stroke-width="1.5"/><path d="M7 3.5h4.5M7 5.5h4.5" stroke="#1818b0" stroke-width="1.1"/><path d="M5 2.5l1.3 1.5" stroke="#1818b0" stroke-width="0.9"/></svg>
<div class="t c" style="left:419px;top:157px;">PIW</div>
<div class="t c" style="left:499px;top:157px;">Real</div>
<svg class="a" style="left:398px;top:177px" width="15" height="10" viewBox="0 0 15 10"><path d="M0.5 0.5l2.5 2" stroke="#000" stroke-width="1"/><path d="M13.6 2v7h-9" fill="none" stroke="#000" stroke-opacity="0.55" stroke-width="1"/><rect x="3.75" y="1.25" width="9.5" height="6.5" fill="#fff" stroke="#000038" stroke-width="1.5"/></svg>
<div class="a" style="left:578px;top:173px;width:247px;height:19px;background:#EFEDE4;"></div>
<div class="a" style="left:207px;top:230px;width:620px;height:1px;background:#000;"></div>
<div class="a" style="left:195px;top:231px;width:630px;height:6px;background:#ECE9D8;"></div>
<div class="a" style="left:200px;top:231px;width:625px;height:2px;background:#F6F5EE;"></div>
<div class="a" style="left:207px;top:237px;width:620px;height:560px;background:#fff;border-top:1px solid #000;border-left:1px solid #000"></div>
<div class="t c" style="left:223px;top:255px;">FC2 : Title:</div>
<div class="a" style="left:224px;top:278px;width:566px;height:40px;background:#C0C0C0;border:1px solid #000"></div>
<div class="t c" style="left:225px;top:281px;">Comment:</div>
<div class="a" style="left:222px;top:324px;width:76px;height:18px;background:#008080;border:1px dashed #fff"></div>
<div class="t c" style="left:223px;top:327px;font-size:13px;font-weight:bold;color:#fff;letter-spacing:0.2px">Network 1</div>
<div class="t c" style="left:297px;top:327px;">: Title:</div>
<div class="a" style="left:224px;top:350px;width:566px;height:40px;background:#C0C0C0;border:1px solid #000"></div>
<div class="t c" style="left:225px;top:353px;">Comment:</div>
<div class="t c" style="left:266px;top:399px;">L</div>
<div class="t c" style="left:308px;top:399px;">#HIGH</div>
<div class="t c" style="left:266px;top:415px;">L</div>
<div class="t c" style="left:308px;top:415px;">#LOW</div>
<div class="t c" style="left:266px;top:431px;">-R</div>
<div class="t c" style="left:266px;top:447px;">L</div>
<div class="t c" style="left:308px;top:447px;">2.764800e+004</div>
<div class="t c" style="left:266px;top:463px;">TAK</div>
<div class="t c" style="left:266px;top:479px;">/R</div>
<div class="t c" style="left:266px;top:495px;">T</div>
<div class="t c" style="left:308px;top:495px;">#TEMP2</div>
<div class="t c" style="left:266px;top:527px;">L</div>
<div class="t c" style="left:308px;top:527px;">#PIW</div>
<div class="t c" style="left:266px;top:543px;">ITD</div>
<div class="t c" style="left:266px;top:559px;">DTR</div>
<div class="t c" style="left:266px;top:575px;">L</div>
<div class="t c" style="left:308px;top:575px;">#TEMP2</div>
<div class="t c" style="left:266px;top:591px;">/R</div>
<div class="t c" style="left:266px;top:607px;">L</div>
<div class="t c" style="left:308px;top:607px;">#LOW</div>
<div class="t c" style="left:266px;top:623px;">+R</div>
<div class="t c" style="left:266px;top:639px;">T</div>
<div class="t c" style="left:308px;top:639px;">#OUT_REAL</div>
<div class="t c" style="left:266px;top:655px;">RND</div>
<div class="t c" style="left:266px;top:671px;">T</div>
<div class="t c" style="left:308px;top:671px;">#OUT_INT</div>
</body></html>
